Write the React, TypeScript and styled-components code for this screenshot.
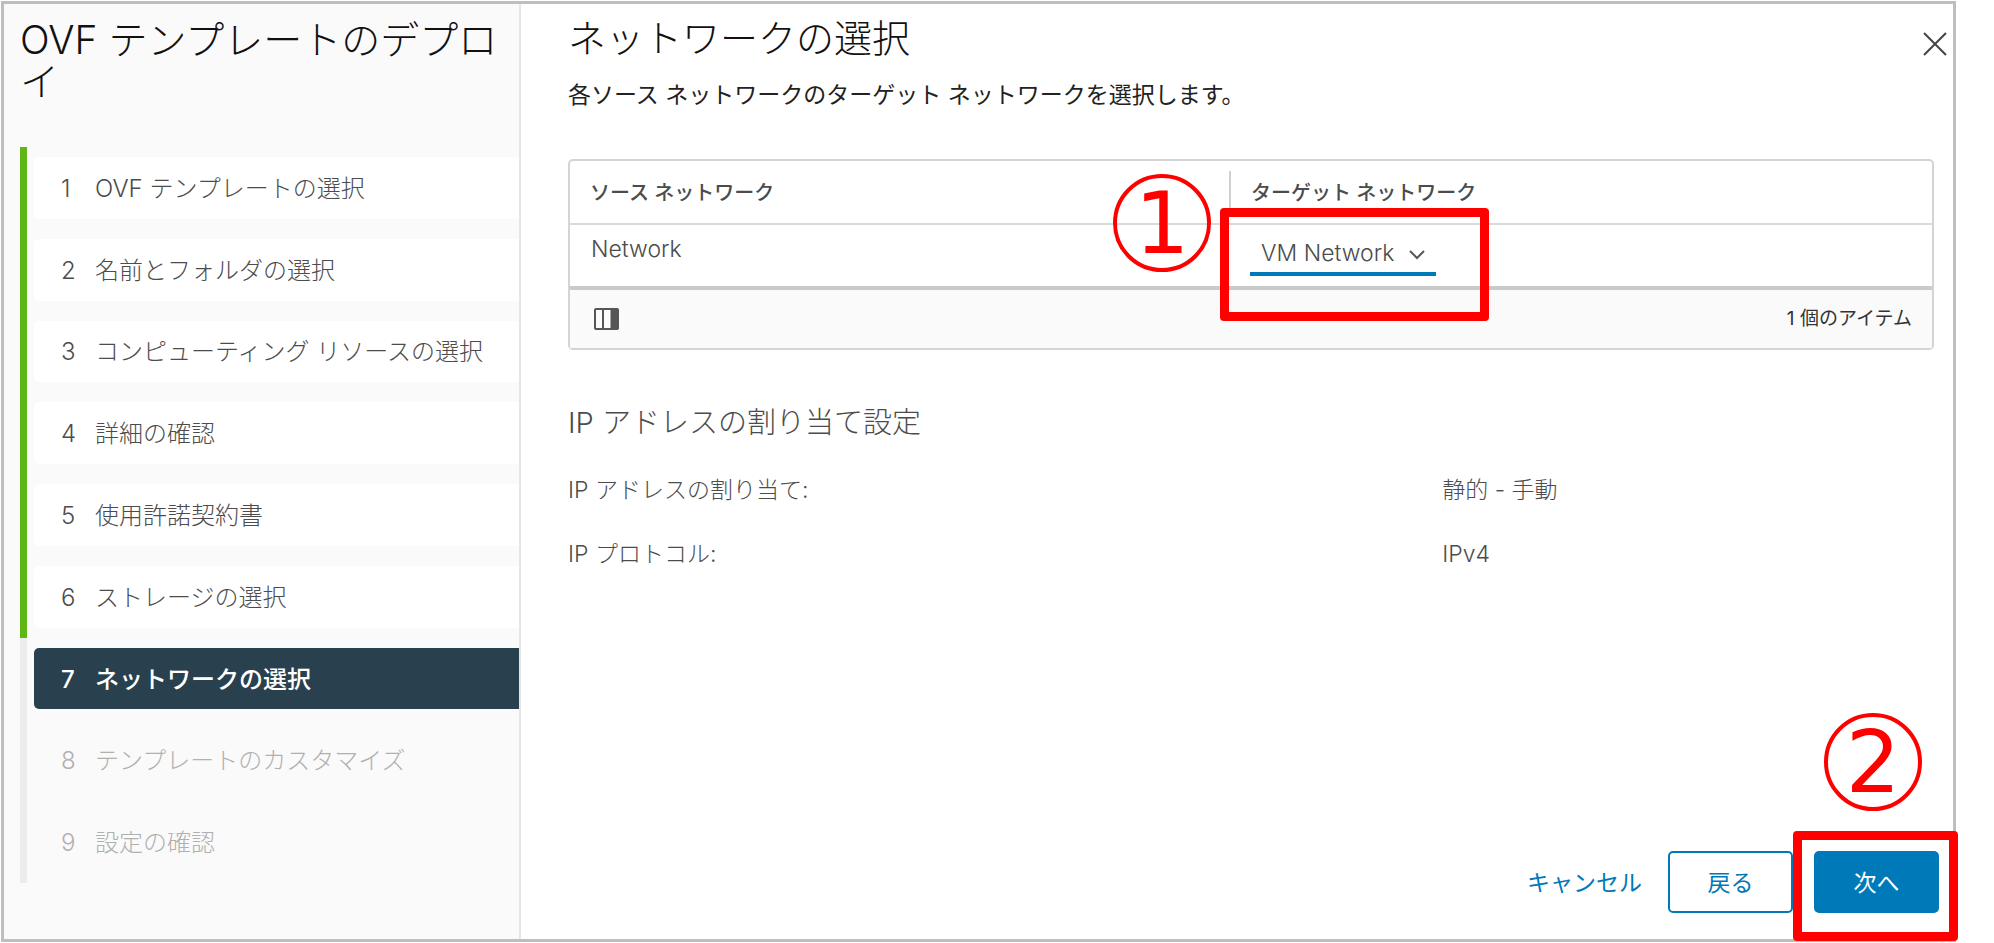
import React from "react";
import styled, { createGlobalStyle, css } from "styled-components";

const GlobalStyle = createGlobalStyle`
  *, *::before, *::after { box-sizing: border-box; }
  body {
    margin: 0;
    background: #fff;
    color: #4c4c4c;
    font-family: Inter, "Noto Sans CJK JP", sans-serif;
    font-size: 23px;
    font-weight: 300;
    line-height: 32px;
  }
  h1, h2, h3, p, ol, dl, dd { margin: 0; padding: 0; }
  button, select { font: inherit; color: inherit; cursor: pointer; }
`;

const Page = styled.div`
  padding: 1px 38px 1px 1px;
`;

const Wizard = styled.div`
  display: flex;
  min-height: calc(100vh - 2px);
  border: 3px solid #bebebe;
`;

const Sidebar = styled.nav`
  flex: 0 0 517px;
  padding: 15px 0 56px 16px;
  background: #fafafa;
  border-right: 2px solid #e6e6e6;
`;

const SidebarTitle = styled.h1`
  color: #111;
  font-size: 39px;
  font-weight: 300;
  line-height: 42px;
  word-break: break-all;
  padding-right: 16px;
`;

const Steps = styled.ol`
  display: flex;
  flex-direction: column;
  height: 736px;
  margin-top: 44px;
  list-style: none;
`;

type StepState = "done" | "current" | "todo";

const Step = styled.li<{ $state: StepState }>`
  display: flex;
  flex: 1;
  padding: 10px 0 10px 7px;
  border-left: 7px solid ${(p) => (p.$state === "done" ? "#5eb715" : "#ececec")};
`;

const stepLook = {
  done: css`
    background: #fff;
    color: #4c4c4c;
  `,
  current: css`
    background: #29404e;
    color: #fff;
    font-weight: 500;
  `,
  todo: css`
    background: transparent;
    color: #b0b0b0;
  `,
};

const StepButton = styled.button<{ $state: StepState }>`
  display: flex;
  flex: 1;
  align-items: center;
  padding: 2px 0 0 27px;
  border: 0;
  border-radius: 5px 0 0 5px;
  font-size: 24px;
  text-align: left;
  white-space: nowrap;
  ${(p) => stepLook[p.$state]}
`;

const StepNumber = styled.span`
  flex: 0 0 34px;
`;

const Main = styled.main`
  display: flex;
  flex: 1;
  flex-direction: column;
  min-width: 0;
  padding: 13px 14px 26px 47px;
`;

const Header = styled.header`
  display: flex;
  justify-content: space-between;
  align-items: flex-start;
`;

const PageTitle = styled.h2`
  color: #111;
  font-size: 38px;
  font-weight: 300;
  line-height: 42px;
`;

const CloseButton = styled.button`
  display: flex;
  margin: 13px -10px 0 0;
  padding: 0;
  border: 0;
  background: none;
`;

const Content = styled.div`
  margin-right: 5px;
`;

const Lead = styled.p`
  margin-top: 20px;
  color: #222;
  font-weight: 400;
`;

const Grid = styled.section`
  margin-top: 48px;
  border: 2px solid #d4d4d4;
  border-radius: 5px;
`;

const Table = styled.table`
  width: 100%;
  border-spacing: 0;
  table-layout: fixed;
`;

const HeadCell = styled.th`
  width: ${(p) => p.width};
  height: 64px;
  padding: 10px 0;
  border-bottom: 2px solid #dadada;
  font-size: 20px;
  font-weight: 500;
  text-align: left;
`;

const HeadLabel = styled.div<{ $divided?: boolean }>`
  padding: 6px 0 4px 20px;
  border-left: ${(p) => (p.$divided ? "2px solid #d0d0d0" : "0")};
`;

const Cell = styled.td`
  height: 61px;
  padding: 8px 22px 8px 21px;
  vertical-align: top;
`;

const GridFooter = styled.footer`
  display: flex;
  align-items: center;
  justify-content: space-between;
  height: 62px;
  padding: 0 20px 0 24px;
  border-top: 4px solid #cacaca;
  background: #fafafa;
  color: #333;
  font-size: 19px;
  font-weight: 400;
`;

const IconButton = styled.button`
  display: flex;
  padding: 0;
  border: 0;
  background: none;
`;

const NetworkPicker = styled.div`
  position: relative;
  display: flex;
  align-items: center;
  width: 186px;
  height: 43px;
`;

const NetworkSelect = styled.select`
  appearance: none;
  width: 100%;
  height: 100%;
  padding: 0 0 0 11px;
  border: 0;
  border-bottom: 4px solid #0079b8;
  border-radius: 0;
  background: none;
`;

const PickerArrow = styled.svg`
  position: absolute;
  right: 11px;
  pointer-events: none;
`;

const Highlight = styled.div`
  position: absolute;
  border: 9px solid #f00;
  border-radius: 4px;
  pointer-events: none;
`;

const SelectHighlight = styled(Highlight)`
  inset: -25px -53px -45px -30px;
`;

const NextHighlight = styled(Highlight)`
  inset: -20px -19px -28px -21px;
`;

const Badge = styled.div`
  position: absolute;
  display: flex;
  align-items: center;
  justify-content: center;
  width: 98px;
  height: 98px;
  border: 4px solid #f00;
  border-radius: 50%;
  color: #f00;
  font: 400 86px/90px "DejaVu Sans", sans-serif;
  pointer-events: none;
`;

const SelectBadge = styled(Badge)`
  right: 225px;
  bottom: 4px;
`;

const NextBadge = styled(Badge)`
  right: 17px;
  bottom: 102px;
`;

const SectionTitle = styled.h3`
  margin-top: 53px;
  font-size: 29px;
  font-weight: 300;
  line-height: 40px;
`;

const Settings = styled.dl`
  display: grid;
  grid-template-columns: 64% 1fr;
  row-gap: 32px;
  margin-top: 31px;
`;

const Actions = styled.footer`
  display: flex;
  align-items: center;
  justify-content: flex-end;
  gap: 21px;
  margin-top: auto;
`;

const CancelButton = styled.button`
  padding: 2px 5px 0;
  border: 0;
  background: none;
  color: #0079b8;
  font-weight: 400;
`;

const ActionButton = styled.button<{ $primary?: boolean }>`
  width: 125px;
  height: 62px;
  padding: 2px 0 0;
  border: 2px solid #0079b8;
  border-radius: 5px;
  background: ${(p) => (p.$primary ? "#0079b8" : "#fff")};
  color: ${(p) => (p.$primary ? "#fff" : "#0079b8")};
  font-weight: 400;
`;

const ActionAnchor = styled.div`
  position: relative;
`;

const steps: { label: string; state: StepState }[] = [
  { label: "OVF テンプレートの選択", state: "done" },
  { label: "名前とフォルダの選択", state: "done" },
  { label: "コンピューティング リソースの選択", state: "done" },
  { label: "詳細の確認", state: "done" },
  { label: "使用許諾契約書", state: "done" },
  { label: "ストレージの選択", state: "done" },
  { label: "ネットワークの選択", state: "current" },
  { label: "テンプレートのカスタマイズ", state: "todo" },
  { label: "設定の確認", state: "todo" },
];

export default function App() {
  return (
    <Page>
      <GlobalStyle />
      <Wizard>
        <Sidebar>
          <SidebarTitle>OVF テンプレートのデプロイ</SidebarTitle>
          <Steps>
            {steps.map((step, i) => (
              <Step key={step.label} $state={step.state}>
                <StepButton
                  type="button"
                  $state={step.state}
                  disabled={step.state === "todo"}
                  aria-current={step.state === "current" ? "step" : undefined}
                >
                  <StepNumber>{i + 1}</StepNumber>
                  <span>{step.label}</span>
                </StepButton>
              </Step>
            ))}
          </Steps>
        </Sidebar>
        <Main>
          <Header>
            <PageTitle>ネットワークの選択</PageTitle>
            <CloseButton type="button" aria-label="閉じる">
              <svg width="28" height="28" viewBox="0 0 28 28" fill="none" stroke="#444" strokeWidth="2">
                <path d="M3 3 25 25M25 3 3 25" />
              </svg>
            </CloseButton>
          </Header>
          <Content>
            <Lead>各ソース ネットワークのターゲット ネットワークを選択します。</Lead>
            <Grid>
              <Table>
                <thead>
                  <tr>
                    <HeadCell scope="col" width="659px">
                      <HeadLabel>ソース ネットワーク</HeadLabel>
                    </HeadCell>
                    <HeadCell scope="col">
                      <HeadLabel $divided>ターゲット ネットワーク</HeadLabel>
                    </HeadCell>
                  </tr>
                </thead>
                <tbody>
                  <tr>
                    <Cell>Network</Cell>
                    <Cell>
                      <NetworkPicker>
                        <NetworkSelect aria-label="ターゲット ネットワーク" defaultValue="VM Network">
                          <option>VM Network</option>
                        </NetworkSelect>
                        <PickerArrow width="16" height="10" viewBox="0 0 16 10" fill="none" stroke="#565656" strokeWidth="2">
                          <path d="M1 1 8 8 15 1" />
                        </PickerArrow>
                        <SelectHighlight />
                        <SelectBadge>1</SelectBadge>
                      </NetworkPicker>
                    </Cell>
                  </tr>
                </tbody>
              </Table>
              <GridFooter>
                <IconButton type="button" aria-label="列の管理">
                  <svg width="25" height="22" viewBox="0 0 25 22" fill="none" stroke="#565656">
                    <rect x="1" y="1" width="23" height="20" rx="1" strokeWidth="2" />
                    <path d="M9 1V21" strokeWidth="2" />
                    <path d="M17 1H24V21H17Z" fill="#565656" strokeWidth="1" />
                  </svg>
                </IconButton>
                <span>1 個のアイテム</span>
              </GridFooter>
            </Grid>
            <SectionTitle>IP アドレスの割り当て設定</SectionTitle>
            <Settings>
              <dt>IP アドレスの割り当て:</dt>
              <dd>静的 - 手動</dd>
              <dt>IP プロトコル:</dt>
              <dd>IPv4</dd>
            </Settings>
          </Content>
          <Actions>
            <CancelButton type="button">キャンセル</CancelButton>
            <ActionButton type="button">戻る</ActionButton>
            <ActionAnchor>
              <ActionButton type="button" $primary>
                次へ
              </ActionButton>
              <NextHighlight />
              <NextBadge>2</NextBadge>
            </ActionAnchor>
          </Actions>
        </Main>
      </Wizard>
    </Page>
  );
}
